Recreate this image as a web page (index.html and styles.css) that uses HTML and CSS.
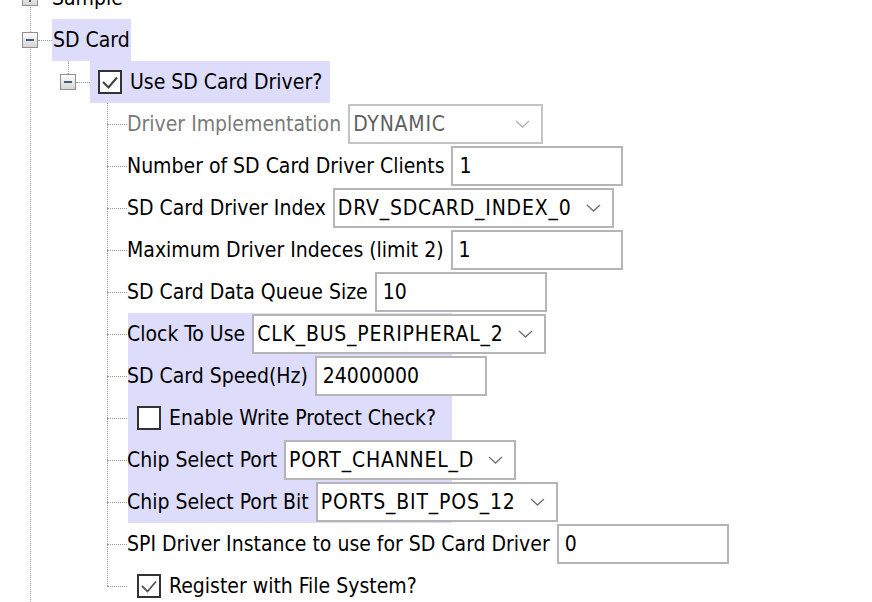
FILE: index.html
```html
<!DOCTYPE html>
<html>
<head>
<meta charset="utf-8">
<title>SD Card configuration tree</title>
<link rel="stylesheet" href="styles.css">
</head>
<body>
<div class="tree">
  <div class="row l1">
    <svg class="exp" viewBox="0 0 16 16"><defs><linearGradient id="g0" x1="0" y1="0" x2="0" y2="1"><stop offset="0" stop-color="#ffffff"/><stop offset="1" stop-color="#d4d4d4"/></linearGradient></defs><rect x="0.5" y="0.5" width="15" height="15" fill="url(#g0)" stroke="#8f8f8f"/><path d="M4 8h8M8 4v8" stroke="#4a5a70" stroke-width="2"/></svg>
    <span class="hconn c1"></span>
    <span class="label">Sample</span>
  </div>
  <div class="row l1">
    <svg class="exp" viewBox="0 0 16 16"><defs><linearGradient id="g1" x1="0" y1="0" x2="0" y2="1"><stop offset="0" stop-color="#ffffff"/><stop offset="1" stop-color="#d4d4d4"/></linearGradient></defs><rect x="0.5" y="0.5" width="15" height="15" fill="url(#g1)" stroke="#8f8f8f"/><path d="M4 8h8" stroke="#4a5a70" stroke-width="2"/></svg>
    <span class="hconn c1"></span>
    <span class="label hl">SD Card</span>
  </div>
  <div class="row l2">
    <svg class="exp" viewBox="0 0 16 16"><defs><linearGradient id="g2" x1="0" y1="0" x2="0" y2="1"><stop offset="0" stop-color="#ffffff"/><stop offset="1" stop-color="#d4d4d4"/></linearGradient></defs><rect x="0.5" y="0.5" width="15" height="15" fill="url(#g2)" stroke="#8f8f8f"/><path d="M4 8h8" stroke="#4a5a70" stroke-width="2"/></svg>
    <span class="hconn c1"></span>
    <span class="label hl">
      <svg class="box" viewBox="0 0 24 24"><rect x="1" y="1" width="22" height="22" fill="#fff" stroke="#333" stroke-width="2"/><path d="M5 12l5.5 5.5l8.5-10" fill="none" stroke="#444" stroke-width="2.2"/></svg>
      Use SD Card Driver?
    </span>
  </div>
  <div class="children">
    <div class="row l3">
      <span class="hconn c3"></span>
      <span class="label dis">Driver Implementation</span>
      <span class="select disabled"><span class="val">DYNAMIC</span><svg class="chev" viewBox="0 0 15 8"><path d="M1 1l6.5 6l6.5-6" fill="none" stroke="#b0b0b0" stroke-width="1.3"/></svg></span>
    </div>
    <div class="row l3">
      <span class="hconn c3"></span>
      <span class="label">Number of SD Card Driver Clients</span>
      <span class="field">1</span>
    </div>
    <div class="row l3">
      <span class="hconn c3"></span>
      <span class="label">SD Card Driver Index</span>
      <span class="select"><span class="val">DRV_SDCARD_INDEX_0</span><svg class="chev" viewBox="0 0 15 8"><path d="M1 1l6.5 6l6.5-6" fill="none" stroke="#707070" stroke-width="1.3"/></svg></span>
    </div>
    <div class="row l3">
      <span class="hconn c3"></span>
      <span class="label">Maximum Driver Indeces (limit 2)</span>
      <span class="field">1</span>
    </div>
    <div class="row l3">
      <span class="hconn c3"></span>
      <span class="label">SD Card Data Queue Size</span>
      <span class="field">10</span>
    </div>
    <div class="group">
      <div class="row l3">
        <span class="hconn c3"></span>
        <span class="label">Clock To Use</span>
        <span class="select"><span class="val">CLK_BUS_PERIPHERAL_2</span><svg class="chev" viewBox="0 0 15 8"><path d="M1 1l6.5 6l6.5-6" fill="none" stroke="#707070" stroke-width="1.3"/></svg></span>
      </div>
      <div class="row l3">
        <span class="hconn c3"></span>
        <span class="label">SD Card Speed(Hz)</span>
        <span class="field">24000000</span>
      </div>
      <div class="row l3">
        <span class="hconn c3"></span>
        <span class="label">
          <svg class="box" viewBox="0 0 24 24"><rect x="1" y="1" width="22" height="22" fill="#fff" stroke="#333" stroke-width="2"/></svg>
          Enable Write Protect Check?
        </span>
      </div>
      <div class="row l3">
        <span class="hconn c3"></span>
        <span class="label">Chip Select Port</span>
        <span class="select"><span class="val">PORT_CHANNEL_D</span><svg class="chev" viewBox="0 0 15 8"><path d="M1 1l6.5 6l6.5-6" fill="none" stroke="#707070" stroke-width="1.3"/></svg></span>
      </div>
      <div class="row l3">
        <span class="hconn c3"></span>
        <span class="label">Chip Select Port Bit</span>
        <span class="select"><span class="val">PORTS_BIT_POS_12</span><svg class="chev" viewBox="0 0 15 8"><path d="M1 1l6.5 6l6.5-6" fill="none" stroke="#707070" stroke-width="1.3"/></svg></span>
      </div>
    </div>
    <div class="row l3">
      <span class="hconn c3"></span>
      <span class="label">SPI Driver Instance to use for SD Card Driver</span>
      <span class="field">0</span>
    </div>
    <div class="row l3">
      <span class="hconn c3"></span>
      <span class="label">
        <svg class="box" viewBox="0 0 24 24"><rect x="1" y="1" width="22" height="22" fill="#fff" stroke="#333" stroke-width="2"/><path d="M5 12l5.5 5.5l8.5-10" fill="none" stroke="#555" stroke-width="1.8"/></svg>
        Register with File System?
      </span>
    </div>
  </div>
</div>
</body>
</html>
```

FILE: styles.css
```css
html, body {
  margin: 0;
  padding: 0;
  background: #ffffff;
}

body {
  width: 872px;
  height: 602px;
  overflow: hidden;
  font-family: "DejaVu Sans", "Liberation Sans", sans-serif;
  font-stretch: condensed;
  font-size: 21px;
  color: #000000;
}

.tree {
  margin-top: -23px;
  min-height: 660px;
  background: repeating-linear-gradient(to bottom, #999 0 1px, transparent 1px 2px) 30px 0 / 1px 100% no-repeat;
}

.row {
  height: 42px;
  display: flex;
  align-items: center;
  white-space: nowrap;
}

.l1 {
  padding-left: 22px;
}

.l2 {
  padding-left: 60px;
  background: repeating-linear-gradient(to bottom, #999 0 1px, transparent 1px 2px) 68px 0 / 1px 14px no-repeat;
}

.l3 {
  padding-left: 107px;
}

.exp {
  width: 16px;
  height: 16px;
  flex: none;
  display: block;
}

.hconn {
  height: 0;
  border-top: 1px dotted #999;
  flex: none;
}

.c1 {
  width: 14px;
}

.c3 {
  width: 20px;
}

.label {
  align-self: stretch;
  display: flex;
  align-items: center;
}

.hl {
  background: #dddcfa;
}

.l1 .hl {
  padding: 0 1px;
}

.l2 .label {
  padding: 0 8px;
  gap: 8px;
}

.box {
  width: 24px;
  height: 24px;
  flex: none;
  display: block;
}

.l3 .box {
  margin-left: 10px;
  margin-right: 8px;
}

.children {
  background: repeating-linear-gradient(to bottom, #999 0 1px, transparent 1px 2px) 107px 0 / 1px calc(100% - 21px) no-repeat;
}

.group {
  background: linear-gradient(#dddcfa, #dddcfa) 128px 0 / 324px 100% no-repeat;
}

.dis {
  color: #7a7a7a;
}

.field,
.select {
  box-sizing: border-box;
  height: 40px;
  border: 2px solid #b5b5b5;
  background: #ffffff;
  margin-left: 7px;
  display: flex;
  align-items: center;
  flex: none;
}

.field {
  width: 172px;
  padding-left: 6px;
}

.select {
  min-width: 195px;
  padding: 0 11px 0 3px;
  gap: 14px;
}

.val {
  letter-spacing: 0.8px;
}

.select.disabled {
  color: #5e5e5e;
  border-color: #c4c4c4;
}

.chev {
  margin-left: auto;
  width: 15px;
  height: 8px;
  flex: none;
  display: block;
}
```
